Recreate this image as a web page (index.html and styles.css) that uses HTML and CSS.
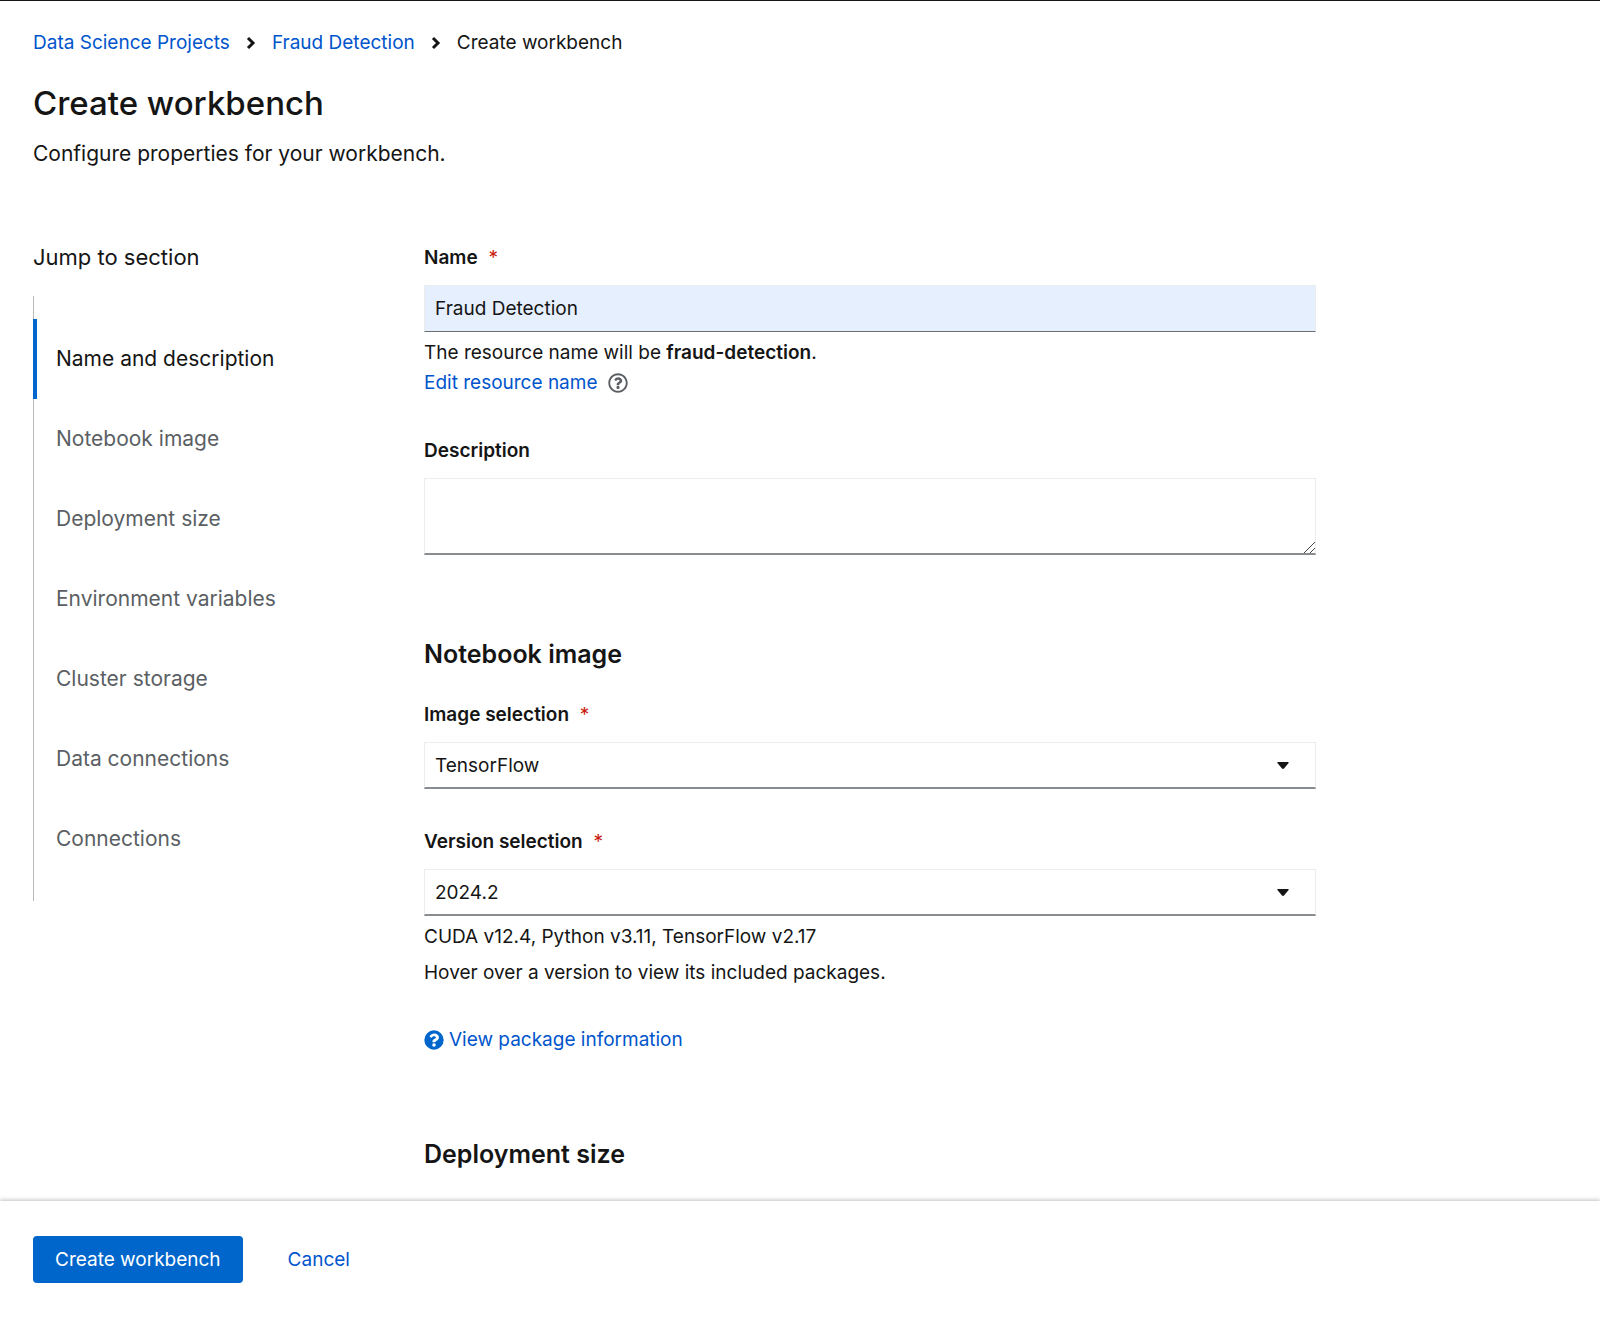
FILE: index.html
```
<!DOCTYPE html>
<html lang="en">
<head>
    <meta charset="UTF-8">
    <meta name="viewport" content="width=device-width, initial-scale=1.0">
    <title>Create workbench</title>
    <link rel="stylesheet" href="styles.css">
</head>
<body>

    <main class="page">
        <nav class="breadcrumb" aria-label="Breadcrumb">
            <a href="#">Data Science Projects</a>
            <svg class="chevron" viewBox="0 0 10 14" aria-hidden="true"><path d="M2 2l5 5-5 5"/></svg>
            <a href="#">Fraud Detection</a>
            <svg class="chevron" viewBox="0 0 10 14" aria-hidden="true"><path d="M2 2l5 5-5 5"/></svg>
            <span aria-current="page">Create workbench</span>
        </nav>

        <h1>Create workbench</h1>
        <p class="intro">Configure properties for your workbench.</p>

        <div class="columns">
            <nav class="jump-links" aria-label="Jump to section">
                <div class="jump-title">Jump to section</div>
                <ul>
                    <li class="active"><a href="#name-section">Name and description</a></li>
                    <li><a href="#image-section">Notebook image</a></li>
                    <li><a href="#size-section">Deployment size</a></li>
                    <li><a href="#">Environment variables</a></li>
                    <li><a href="#">Cluster storage</a></li>
                    <li><a href="#">Data connections</a></li>
                    <li><a href="#">Connections</a></li>
                </ul>
            </nav>

            <form id="workbench-form">
                <section id="name-section">
                    <div class="field">
                        <label for="name">Name <span class="required">*</span></label>
                        <input class="control filled" type="text" id="name" value="Fraud Detection">
                        <div class="helper">
                            <p>The resource name will be <b>fraud-detection</b>.</p>
                            <div class="edit-row">
                                <a href="#">Edit resource name</a>
                                <button type="button" class="help-button" aria-label="More info">
                                    <svg viewBox="0 0 512 512" aria-hidden="true"><path d="M256 8C119 8 8 119 8 256s111 248 248 248 248-111 248-248S393 8 256 8zm0 448c-110 0-200-90-200-200S146 56 256 56s200 90 200 200-90 200-200 200zm108-255c0 67-73 68-73 93v6c0 7-5 12-12 12h-46c-7 0-12-5-12-12v-9c0-36 27-50 48-62 17-10 28-16 28-29 0-16-21-27-38-27-22 0-33 10-46 28-4 5-12 6-17 2l-28-21c-5-4-6-11-3-17 24-35 54-55 99-55 47 0 100 37 100 91zm-66 167a42 42 0 1 1-84 0 42 42 0 0 1 84 0z"/></svg>
                                </button>
                            </div>
                        </div>
                    </div>
                    <div class="field">
                        <label for="description">Description</label>
                        <textarea class="control" id="description"></textarea>
                    </div>
                </section>

                <section id="image-section">
                    <h2>Notebook image</h2>
                    <div class="field">
                        <label for="image">Image selection <span class="required">*</span></label>
                        <div class="select-wrap">
                            <select class="control" id="image">
                                <option>TensorFlow</option>
                            </select>
                            <svg class="caret" viewBox="0 0 12 7" aria-hidden="true"><path d="M1 0h10q1 0 .6 1L7 6.500q-1 .8-2 0L.4 1Q0 0 1 0z"/></svg>
                        </div>
                    </div>
                    <div class="field">
                        <label for="version">Version selection <span class="required">*</span></label>
                        <div class="select-wrap">
                            <select class="control" id="version">
                                <option>2024.2</option>
                            </select>
                            <svg class="caret" viewBox="0 0 12 7" aria-hidden="true"><path d="M1 0h10q1 0 .6 1L7 6.500q-1 .8-2 0L.4 1Q0 0 1 0z"/></svg>
                        </div>
                        <div class="helper spaced">
                            <p>CUDA v12.4, Python v3.11, TensorFlow v2.17</p>
                            <p>Hover over a version to view its included packages.</p>
                        </div>
                    </div>
                    <a class="package-link" href="#">
                        <svg viewBox="0 0 512 512" aria-hidden="true"><path fill-rule="evenodd" d="M504 256a248 248 0 1 1-496 0 248 248 0 0 1 496 0zM263 90c-55 0-89 23-117 64-3 5-2 12 3 16l35 26c5 4 13 3 17-2 18-23 30-36 57-36 21 0 46 13 46 33 0 15-13 23-33 34-24 13-55 30-55 72v7c0 7 5 12 12 12h56c7 0 12-5 12-12v-4c0-29 86-30 86-110 0-59-62-100-119-100zm-7 248a46 46 0 1 0 0 92 46 46 0 0 0 0-92z"/></svg>
                        View package information
                    </a>
                </section>

                <section id="size-section">
                    <h2>Deployment size</h2>
                </section>
            </form>
        </div>
    </main>

    <footer class="actions">
        <button type="submit" form="workbench-form" class="btn primary">Create workbench</button>
        <button type="button" class="btn link">Cancel</button>
    </footer>

</body>
</html>
```
FILE: styles.css
```
* {
    box-sizing: border-box;
}

body {
    margin: 0;
    height: 100vh;
    display: flex;
    flex-direction: column;
    font-family: 'Inter', sans-serif;
    font-size: 19px;
    line-height: 30px;
    color: #151515;
    background-color: #fff;
    border-top: 1px solid #151515;
}

h1, h2, p, ul {
    margin: 0;
    padding: 0;
}

a {
    color: #0055cc;
    text-decoration: none;
}

a:hover {
    text-decoration: underline;
}

.page {
    flex: 1;
    min-height: 0;
    overflow: hidden;
    padding: 27px 33px 0;
}

.breadcrumb {
    display: flex;
    align-items: center;
    gap: 16px;
}

.chevron {
    width: 10px;
    height: 14px;
    fill: none;
    stroke: #151515;
    stroke-width: 3;
}

h1 {
    margin-top: 23px;
    font-size: 33px;
    line-height: 44px;
    font-weight: 500;
}

.intro {
    margin-top: 12px;
    font-size: 21px;
    line-height: 34px;
}

.columns {
    display: grid;
    grid-template-columns: 360px minmax(0, 892px);
    gap: 31px;
    margin-top: 71px;
}

/* left side links */
.jump-title {
    font-size: 22px;
}

.jump-links ul {
    margin-top: 24px;
    padding: 23px 0 22px;
    list-style: none;
    box-shadow: inset 1px 0 #b8bbbe;
}

.jump-links li {
    font-size: 21px;
}

.jump-links a {
    display: block;
    padding: 25px 0 25px 23px;
    color: #5b5f64;
}

.jump-links .active a {
    color: #151515;
    box-shadow: inset 4px 0 #0066cc;
}

/* form */
section + section {
    margin-top: 82px;
}

h2 {
    font-size: 25px;
    line-height: 34px;
    font-weight: 600;
}

h2 + .field {
    margin-top: 28px;
}

.field + .field {
    margin-top: 37px;
}

label {
    display: block;
    margin-bottom: 11px;
    line-height: 32px;
    font-weight: 600;
}

.required {
    margin-left: 6px;
    color: #c9190b;
    font-weight: 400;
}

.control {
    display: block;
    width: 100%;
    height: 47px;
    padding: 0 10px;
    font-family: inherit;
    font-size: inherit;
    color: #151515;
    background-color: #fff;
    border: 1px solid #ececec;
    border-bottom: 2px solid #8a8d90;
    border-radius: 0;
    appearance: none;
}

.control.filled {
    background-color: #e6effe;
    border-bottom: 1px solid #6a6e73;
}

textarea.control {
    height: 77px;
    resize: vertical;
}

textarea.control::-webkit-resizer {
    background: linear-gradient(135deg, transparent 61%, #444 61%, #444 65%, transparent 65%, transparent 81%, #444 81%, #444 85%, transparent 85%);
}

.select-wrap {
    position: relative;
}

.caret {
    position: absolute;
    top: 20px;
    right: 27px;
    width: 12px;
    height: 7px;
    fill: #151515;
    pointer-events: none;
}

.helper {
    margin-top: 6px;
}

.helper b {
    font-weight: 600;
}

.spaced p + p {
    margin-top: 6px;
}

.edit-row {
    display: flex;
    align-items: center;
    gap: 10px;
}

.help-button {
    display: flex;
    padding: 0;
    border: none;
    background: none;
    cursor: pointer;
}

.help-button svg {
    width: 20px;
    height: 20px;
    fill: #5b5f64;
}

.package-link {
    display: flex;
    align-items: center;
    gap: 5px;
    width: fit-content;
    margin-top: 37px;
}

.package-link svg {
    width: 20px;
    height: 20px;
    fill: #0066cc;
}

/* bottom bar */
.actions {
    position: relative;
    display: flex;
    gap: 23px;
    padding: 35px 33px 34px;
    background-color: #fff;
    box-shadow: 0 -1px 4px rgba(0, 0, 0, 0.25);
}

.btn {
    height: 47px;
    padding: 0 22px;
    border: none;
    border-radius: 4px;
    font-family: inherit;
    font-size: inherit;
    cursor: pointer;
}

.primary {
    color: #fff;
    background-color: #0066cc;
}

.primary:hover {
    background-color: #004080;
}

.link {
    color: #0055cc;
    background: none;
}
```
